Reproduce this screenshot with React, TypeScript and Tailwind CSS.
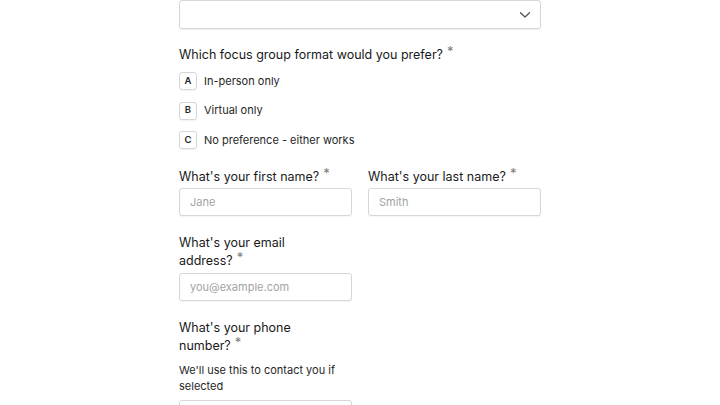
import React from "react";

const font = { fontFamily: "Inter, 'Noto Sans', sans-serif" };

function Label({ text }: { text: string }) {
  const words = text.split(" ");
  const last = words.pop();
  return (
    <div className="text-[12.5px] leading-[18px] font-normal text-[#1a1a1a]">
      {words.join(" ")}{" "}
      <span className="whitespace-nowrap">
        {last}
        <span className="ml-[4px] relative top-[-3px] text-[13px] leading-none text-[#7a7a7a] font-normal">*</span>
      </span>
    </div>
  );
}

function Input({ placeholder }: { placeholder?: string }) {
  return (
    <div className="h-[28px] w-full rounded-[3px] border border-[#d6d6d6] bg-white px-[10px] flex items-center text-[11px] text-[#a3a3a3] shadow-[0_1px_1px_rgba(0,0,0,0.04)]">
      {placeholder}
    </div>
  );
}

function Option({ letter, text }: { letter: string; text: string }) {
  return (
    <div className="flex items-center gap-[7px] h-[18px]">
      <div className="w-[18px] h-[18px] rounded-[3px] border border-[#d6d6d6] flex items-center justify-center text-[9.5px] font-semibold text-[#262626] shadow-[0_1px_1px_rgba(0,0,0,0.05)]">
        {letter}
      </div>
      <span className="text-[11px] text-[#262626]">{text}</span>
    </div>
  );
}

export default function App() {
  return (
    <div className="w-[720px] h-[405px] overflow-hidden bg-white" style={font}>
      <div className="w-[362px] mx-auto flex flex-col">
        <div className="h-[29px] w-full rounded-[3px] border border-[#d6d6d6] bg-white flex items-center justify-end pr-[9px] shadow-[0_1px_1px_rgba(0,0,0,0.06)]">
          <svg width="12" height="8" viewBox="0 0 12 8" fill="none">
            <path d="M1.5 1.8L6 6L10.5 1.8" stroke="#555555" strokeWidth="1.3" strokeLinecap="round" strokeLinejoin="round" />
          </svg>
        </div>

        <div className="mt-[17px]">
          <Label text="Which focus group format would you prefer?" />
        </div>
        <div className="mt-[8px] flex flex-col gap-[11.5px]">
          <Option letter="A" text="In-person only" />
          <Option letter="B" text="Virtual only" />
          <Option letter="C" text="No preference - either works" />
        </div>

        <div className="mt-[19px] grid grid-cols-2 gap-x-[16px]">
          <div className="flex flex-col gap-[2px]">
            <Label text="What's your first name?" />
            <Input placeholder="Jane" />
          </div>
          <div className="flex flex-col gap-[2px]">
            <Label text="What's your last name?" />
            <Input placeholder="Smith" />
          </div>
        </div>

        <div className="mt-[18px] grid grid-cols-2 gap-x-[16px]">
          <div className="flex flex-col gap-[3px]">
            <Label text="What's your email address?" />
            <Input placeholder="you@example.com" />
          </div>
        </div>

        <div className="mt-[18px] grid grid-cols-2 gap-x-[16px]">
          <div className="flex flex-col">
            <Label text="What's your phone number?" />
            <div className="mt-[7px] text-[11px] leading-[16px] text-[#262626]">
              We'll use this to contact you if selected
            </div>
            <div className="mt-[6px]">
              <Input />
            </div>
          </div>
        </div>
      </div>
    </div>
  );
}
